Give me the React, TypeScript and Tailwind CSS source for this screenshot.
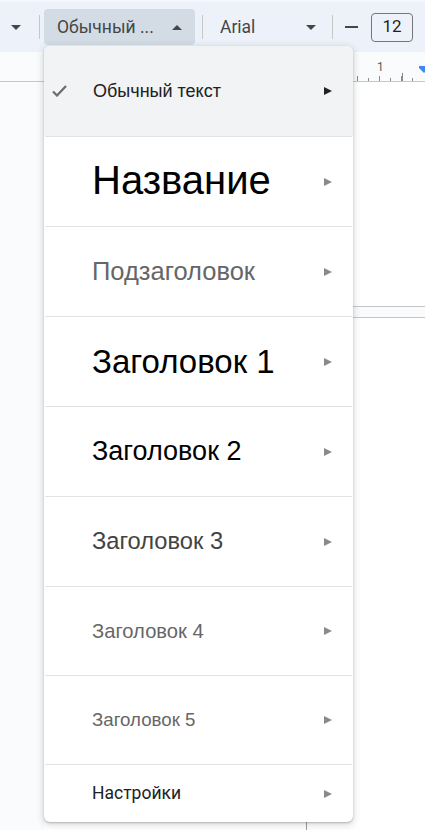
import React from 'react';

const arial = { fontFamily: '"Liberation Sans", Arial, sans-serif' };
const roboto = { fontFamily: 'Roboto, "Liberation Sans", Arial, sans-serif' };

function Caret({ up = false, className = '' }: { up?: boolean; className?: string }) {
  return (
    <svg width="10" height="5" viewBox="0 0 10 5" className={className}>
      {up ? <path d="M0 5 L5 0 L10 5 Z" fill="currentColor" /> : <path d="M0 0 L5 5 L10 0 Z" fill="currentColor" />}
    </svg>
  );
}

function SubArrow({ dark = false }: { dark?: boolean }) {
  return (
    <svg width="8" height="8" viewBox="0 0 8 8" className={dark ? 'text-[#202124]' : 'text-[#8a8a8a]'}>
      <path d="M0 0 L8 4 L0 8 Z" fill="currentColor" />
    </svg>
  );
}

interface StyleItem {
  label: string;
  className: string;
  height: string;
}

const items: StyleItem[] = [
  { label: 'Название', className: 'text-[40px] text-black -mt-[3px]', height: 'h-[89px]' },
  { label: 'Подзаголовок', className: 'text-[25.5px] text-[#666666]', height: 'h-[89px]' },
  { label: 'Заголовок 1', className: 'text-[33px] text-black', height: 'h-[89px]' },
  { label: 'Заголовок 2', className: 'text-[27px] text-black', height: 'h-[89px]' },
  { label: 'Заголовок 3', className: 'text-[23.7px] text-[#434343]', height: 'h-[89px]' },
  { label: 'Заголовок 4', className: 'text-[20.2px] text-[#666666]', height: 'h-[88px]' },
  { label: 'Заголовок 5', className: 'text-[18.7px] text-[#666666]', height: 'h-[88px]' },
];

function Divider() {
  return <div className="mx-[1px] h-px bg-[#e3e3e3]" />;
}

function StyleMenu() {
  return (
    <div className="absolute left-[44px] top-[46px] w-[309px] overflow-hidden rounded-[6px] bg-white shadow-[0_2px_6px_2px_rgba(60,64,67,0.15),0_1px_2px_rgba(60,64,67,0.3)]">
      <div className="flex h-[90px] items-center bg-[#f1f3f4] pr-[21px]">
        <div className="flex w-[49px] pl-[8px]">
          <svg width="15" height="12" viewBox="0 0 15 12" className="text-[#6b6b6b]">
            <path d="M1 6.5 L5 10.5 L14 1" stroke="currentColor" strokeWidth="2.2" fill="none" />
          </svg>
        </div>
        <span className="flex-1 text-[18px] text-[#202124]" style={arial}>Обычный текст</span>
        <SubArrow dark />
      </div>
      {items.map((it) => (
        <React.Fragment key={it.label}>
          <Divider />
          <div className={`flex ${it.height} items-center pl-[48px] pr-[21px]`}>
            <span className={`flex-1 leading-none ${it.className}`} style={arial}>{it.label}</span>
            <SubArrow />
          </div>
        </React.Fragment>
      ))}
      <Divider />
      <div className="flex h-[57px] items-center pl-[48px] pr-[21px]">
        <span className="flex-1 text-[17.5px] text-[#202124]" style={roboto}>Настройки</span>
        <SubArrow />
      </div>
    </div>
  );
}

function Toolbar() {
  return (
    <div className="flex h-[52px] items-center bg-[#edf2fa] border-t-2 border-[#f4f7fc] text-[#444746]" style={roboto}>
      <div className="flex w-[21px] justify-end">
        <Caret className="text-[#444746]" />
      </div>
      <div className="ml-[18px] h-[24px] w-px bg-[#c7c7c7]" />
      <div className="ml-[4px] flex h-[36px] w-[151px] items-center rounded-[4px] bg-[#d3dbe5] pl-[13px] pr-[13px]">
        <span className="flex-1 text-[17.5px]">Обычный ...</span>
        <Caret up className="text-[#444746]" />
      </div>
      <div className="ml-[7px] h-[24px] w-px bg-[#c7c7c7]" />
      <div className="ml-[17px] flex w-[96px] items-center">
        <span className="flex-1 text-[17.5px]">Arial</span>
        <Caret className="text-[#444746]" />
      </div>
      <div className="ml-[16px] h-[24px] w-px bg-[#c7c7c7]" />
      <div className="ml-[12px] h-[2px] w-[13px] bg-[#444746]" />
      <div className="ml-[13px] flex h-[29px] w-[42px] items-center justify-center rounded-[4px] border border-[#747775] text-[17px] text-[#1f1f1f]">
        12
      </div>
    </div>
  );
}

function Ruler() {
  const ticks = [357, 368, 379, 390, 401, 412];
  return (
    <div className="relative h-[30px] border-b border-[#c7c7c7] bg-[#f9fbfd]">
      {ticks.map((x, i) => (
        <div
          key={x}
          className={`absolute bottom-0 w-px bg-[#8a8a8a] ${i % 2 === 0 ? 'h-[5px]' : 'h-[3px]'}`}
          style={{ left: x }}
        />
      ))}
      <div className="absolute bottom-0 left-[402px] h-[8px] w-px bg-[#8a8a8a]" />
      <span className="absolute left-[377px] top-[6px] text-[12px] text-[#5e5e5e]" style={roboto}>1</span>
      <svg width="10" height="7" viewBox="0 0 10 7" className="absolute left-[419px] top-[14px] text-[#4285f4]">
        <path d="M0 0 L10 0 L10 2 L5 7 L0 2 Z" fill="currentColor" />
      </svg>
    </div>
  );
}

export default function App() {
  return (
    <div className="relative h-[830px] w-[425px] overflow-hidden bg-[#f9fbfd]">
      <Toolbar />
      <Ruler />
      <div className="flex h-[748px]">
        <div className="w-[44px] bg-[#f9fbfd]" />
        <div className="relative flex flex-1 flex-col">
          <div className="h-[224px] bg-white" />
          <div className="h-[12px] border-y border-[#c7c7c7] bg-[#f9fbfd]" />
          <div className="relative flex-1 bg-white">
            <div className="absolute left-[262px] top-0 h-full w-px bg-[#9a9a9a]" />
          </div>
        </div>
      </div>
      <StyleMenu />
    </div>
  );
}
